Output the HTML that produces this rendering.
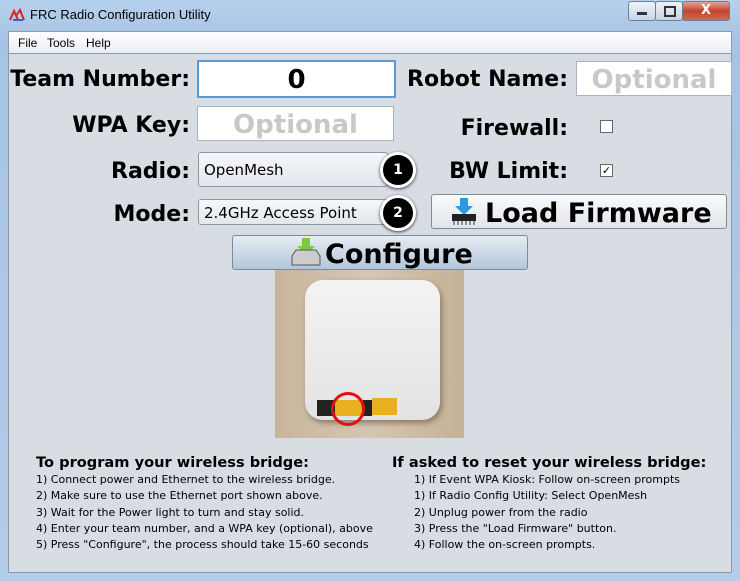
<!DOCTYPE html><html><head><style>
body{margin:0;width:740px;height:581px;overflow:hidden;font-family:"DejaVu Sans",sans-serif;background:#a9c6e4}
.win{position:absolute;left:0;top:0;width:740px;height:581px;background:linear-gradient(#b7d2ee,#a6c3e3 40px,#b4cde8);}
.title{position:absolute;left:30px;top:7px;font-size:13px;color:#000;font-family:"Liberation Sans",sans-serif}
.menu{position:absolute;left:8px;top:31px;width:722px;height:21px;background:linear-gradient(#fff,#e9edf3);border:1px solid #8a9bb0;border-bottom:none;font-size:12px;font-family:"Liberation Sans",sans-serif}
.menu span{position:absolute;top:4px}
.body{position:absolute;left:8px;top:53px;width:722px;height:518px;background:#d8dde4;border:1px solid #8a9bb0}
.lbl{position:absolute;font-weight:bold;font-size:22px;color:#000;text-align:right;white-space:nowrap}
.inp{position:absolute;background:#fff;border:1px solid #a8b4c2;font-weight:bold;font-size:26px;color:#c8c8c8;text-align:center;line-height:36px}
.combo{position:absolute;left:198px;width:190px;border:1px solid #8e99a6;border-radius:3px;background:linear-gradient(#f6f7f9,#e3e7ec);font-size:15px;padding-left:5px;box-sizing:border-box}
.badge{position:absolute;width:30px;height:30px;border-radius:50%;background:#000;border:3px solid #fff;box-shadow:0 1px 3px #333;color:#fff;font-weight:bold;font-size:14px;text-align:center;line-height:30px}
.btn{position:absolute;border:1px solid #7f8b99;border-radius:3px;font-weight:bold;color:#000;box-sizing:border-box;white-space:nowrap}
.cb{position:absolute;width:11px;height:11px;border:1px solid #666;background:#fff;font-size:11px;line-height:11px;text-align:center}
.txt{position:absolute;font-size:11px;line-height:16.2px;white-space:nowrap}
.txt b{font-size:14.6px;display:block;margin-bottom:1px}
.cap{position:absolute;top:1px;width:28px;height:18px;border:1px solid #6d7f96;border-radius:3px;background:linear-gradient(#eef3f9,#c6d4e5)}
</style></head><body><div class="win">
<svg style="position:absolute;left:9px;top:8px" width="16" height="14"><path d="M1 12L5 3L9 12M7 8L11 2L15 12" stroke="#d22" stroke-width="2" fill="none"/><path d="M4 12h10" stroke="#36c" stroke-width="2"/></svg>
<div class="title">FRC Radio Configuration Utility</div>
<div class="cap" style="left:628px;width:26px"><div style="position:absolute;left:8px;top:10px;width:10px;height:3px;background:#333"></div></div>
<div class="cap" style="left:655px;width:26px"><div style="position:absolute;left:8px;top:4px;width:8px;height:7px;border:2px solid #333"></div></div>
<div class="cap" style="left:682px;width:46px;background:linear-gradient(#e8a392,#c4442b 50%,#d26a4f);color:#fff;font-weight:bold;text-align:center;font-size:13px;line-height:18px">X</div>
<div class="menu"><span style="left:9px">File</span><span style="left:38px">Tools</span><span style="left:77px">Help</span></div>
<div class="body"></div>
<div class="lbl" style="left:0px;top:67px;width:190px">Team Number:</div>
<div class="inp" style="left:197px;top:60px;width:195px;height:34px;color:#000;border:2px solid #5c9ad6">0</div>
<div class="lbl" style="left:380px;top:67px;width:188px">Robot Name:</div>
<div class="inp" style="left:576px;top:61px;width:154px;height:33px">Optional</div>
<div class="lbl" style="left:0px;top:113px;width:190px">WPA Key:</div>
<div class="inp" style="left:197px;top:106px;width:195px;height:33px">Optional</div>
<div class="lbl" style="left:380px;top:116px;width:188px">Firewall:</div>
<div class="cb" style="left:600px;top:120px"></div>
<div class="lbl" style="left:0px;top:159px;width:190px">Radio:</div>
<div class="combo" style="top:152px;height:35px;line-height:35px">OpenMesh</div>
<div class="badge" style="left:380px;top:152px">1</div>
<div class="lbl" style="left:380px;top:159px;width:188px">BW Limit:</div>
<div class="cb" style="left:600px;top:164px">✓</div>
<div class="lbl" style="left:0px;top:202px;width:190px">Mode:</div>
<div class="combo" style="top:199px;height:26px;line-height:26px">2.4GHz Access Point</div>
<div class="badge" style="left:380px;top:195px">2</div>
<div class="btn" style="left:431px;top:194px;width:296px;height:35px;background:linear-gradient(#fbfbfc,#e1e5ea);font-size:27px;line-height:37px;padding-left:53px">Load Firmware</div>
<svg style="position:absolute;left:448px;top:196px" width="32" height="30"><path d="M12 2h8v8h5l-9 9-9-9h5z" fill="#2a9be0"/><rect x="4" y="18" width="24" height="7" fill="#222"/><path d="M6 25v4M10 25v4M14 25v4M18 25v4M22 25v4M26 25v4" stroke="#333"/></svg>
<div class="btn" style="left:232px;top:235px;width:296px;height:35px;background:linear-gradient(#e6ecf3,#b3c6d9);font-size:27px;line-height:37px;padding-left:92px">Configure</div>
<svg style="position:absolute;left:289px;top:236px" width="34" height="32"><path d="M13 2h8v8h5l-9 9-9-9h5z" fill="#7ccb3a"/><path d="M3 20l4-6h20l4 6v9H3z" fill="#ccc" stroke="#555"/></svg>
<div style="position:absolute;left:275px;top:270px;width:189px;height:168px;background:linear-gradient(90deg,#c8b49c,#d6c6b1,#c5b197)">
<div style="position:absolute;left:30px;top:10px;width:135px;height:140px;border-radius:18px;background:linear-gradient(#f3f3f2,#e3e3e3);box-shadow:2px 3px 6px #8a7a66"></div>
<div style="position:absolute;left:42px;top:130px;width:55px;height:16px;background:#222"></div>
<div style="position:absolute;left:60px;top:130px;width:28px;height:16px;background:#e8b020"></div>
<div style="position:absolute;left:97px;top:128px;width:25px;height:17px;background:#e8b020"></div>
<div style="position:absolute;left:56px;top:122px;width:28px;height:28px;border:3px solid #e01010;border-radius:50%"></div>
</div>
<div class="txt" style="left:36px;top:455px"><b>To program your wireless bridge:</b>1) Connect power and Ethernet to the wireless bridge.<br>2) Make sure to use the Ethernet port shown above.<br>3) Wait for the Power light to turn and stay solid.<br>4) Enter your team number, and a WPA key (optional), above<br>5) Press "Configure", the process should take 15-60 seconds</div>
<div class="txt" style="left:392px;top:455px"><b>If asked to reset your wireless bridge:</b><div style="padding-left:22px">1) If Event WPA Kiosk: Follow on-screen prompts<br>1) If Radio Config Utility: Select OpenMesh<br>2) Unplug power from the radio<br>3) Press the "Load Firmware" button.<br>4) Follow the on-screen prompts.</div></div>
</div></body></html>
